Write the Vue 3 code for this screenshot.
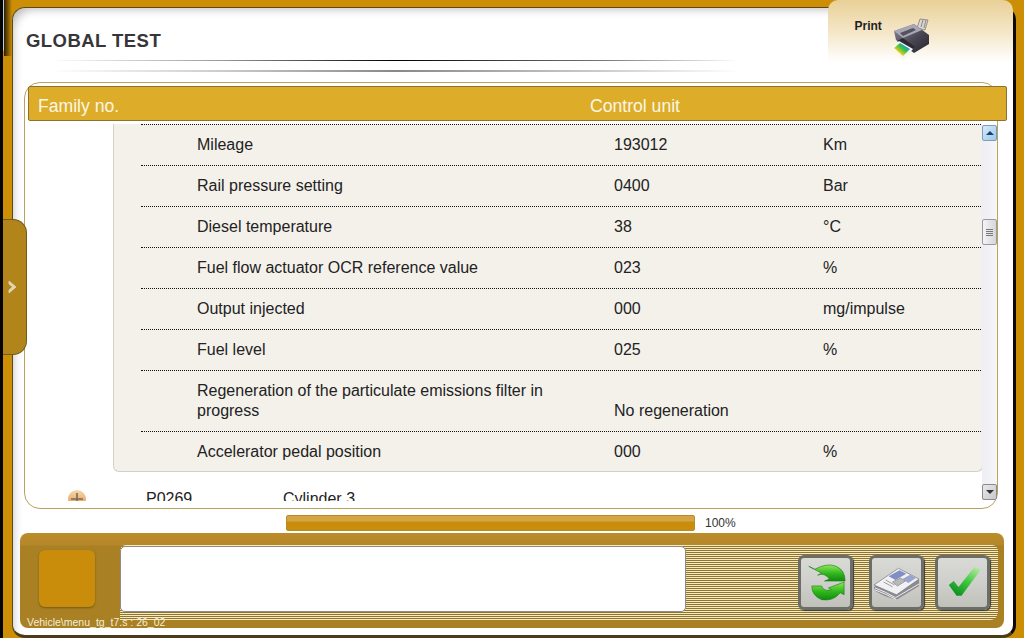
<script setup>
// rows of the opened parameter block
const rows = [
  { name: "Mileage", value: "193012", unit: "Km" },
  { name: "Rail pressure setting", value: "0400", unit: "Bar" },
  { name: "Diesel temperature", value: "38", unit: "°C" },
  { name: "Fuel flow actuator OCR reference value", value: "023", unit: "%" },
  { name: "Output injected", value: "000", unit: "mg/impulse" },
  { name: "Fuel level", value: "025", unit: "%" },
  { name: "Regeneration of the particulate emissions filter in progress", value: "No regeneration", unit: "" },
  { name: "Accelerator pedal position", value: "000", unit: "%" },
];
</script>

<template>
  <div class="frame">
    <div class="corner"></div>
    <div class="corner-shade"></div>

    <div class="panel">
      <!-- Title + print tab -->
      <div class="head">
        <div class="head-left">
          <h1>GLOBAL TEST</h1>
          <div class="line line-dark"></div>
          <div class="line line-soft"></div>
        </div>
        <div class="print-tab">
          <span>Print</span>
          <svg class="printer" width="42" height="42" viewBox="0 0 42 42">
            <defs>
              <linearGradient id="pbody" x1="0" y1="0" x2="1" y2="1">
                <stop offset="0" stop-color="#8d8a9c" />
                <stop offset="0.55" stop-color="#4a4754" />
                <stop offset="1" stop-color="#25232b" />
              </linearGradient>
              <linearGradient id="rainbow" x1="0" y1="1" x2="1" y2="0">
                <stop offset="0" stop-color="#e0289a" />
                <stop offset="0.3" stop-color="#f4c71c" />
                <stop offset="0.55" stop-color="#32c840" />
                <stop offset="0.8" stop-color="#2c8be8" />
                <stop offset="1" stop-color="#7a3cd0" />
              </linearGradient>
            </defs>
            <path d="M26 10 L29 1 L37 2 L34 12 Z" fill="#d8d6d0" stroke="#77736c" stroke-width="0.7" />
            <path d="M30 9 L32 2 M33 10 L35 2" stroke="#77736c" stroke-width="0.8" />
            <path d="M3 13 L23 6 L38 17 L38 26 L23 35 L5 22 Z" fill="url(#pbody)" />
            <path d="M3 13 L23 6 L31 12 L12 20 Z" fill="#a9a6b6" />
            <path d="M9 15 L22 10 L25 12 L12 18 Z" fill="#55525f" />
            <path d="M6 23 L12 20 L24 29 L18 33 Z" fill="#2b2931" />
            <path d="M0 30 L8 23 L22 31 L12 42 Z" fill="#f6f6f2" />
            <path d="M3 30 L9 25 L19 31 L12 38 Z" fill="url(#rainbow)" />
          </svg>
        </div>
      </div>

      <!-- Table frame -->
      <div class="table-frame">
        <div class="table-head">
          <span class="th-family">Family no.</span>
          <span>Control unit</span>
        </div>
        <div class="table-body">
          <div class="scroll-area">
            <div class="detail">
              <div v-for="row in rows" :key="row.name" class="row">
                <div class="cell-name">{{ row.name }}</div>
                <div>{{ row.value }}</div>
                <div>{{ row.unit }}</div>
              </div>
            </div>
            <div class="fault-row">
              <svg class="plus" width="18" height="18" viewBox="0 0 18 18">
                <defs>
                  <linearGradient id="peach" x1="0" y1="0" x2="0" y2="1">
                    <stop offset="0" stop-color="#f7d9a8" />
                    <stop offset="1" stop-color="#e0904c" />
                  </linearGradient>
                </defs>
                <circle cx="9" cy="9" r="9" fill="url(#peach)" />
                <path d="M9 3 V15 M3 9 H15" stroke="#7a6a58" stroke-width="1.6" />
              </svg>
              <span class="code">P0269</span>
              <span>Cylinder 3</span>
            </div>
          </div>
          <div class="scrollbar">
            <div class="sb-btn sb-up"><i></i></div>
            <div class="sb-thumb"><b></b><b></b><b></b><b></b></div>
            <div class="sb-btn sb-down"><i></i></div>
          </div>
        </div>
      </div>

      <!-- Progress -->
      <div class="progress-row">
        <div class="progress"><div class="progress-fill"></div></div>
        <span>100%</span>
      </div>

      <!-- Bottom bar -->
      <div class="bottom-bar">
        <div class="bar-left">
          <div class="square"></div>
          <div class="path-text">Vehicle\menu_tg_t7.s : 26_02</div>
        </div>
        <div class="stripes">
          <div class="message"></div>
          <div class="buttons">
            <button class="btn">
              <svg width="50" height="50" viewBox="0 0 50 50">
                <defs>
                  <linearGradient id="g1" x1="0" y1="0" x2="0" y2="1">
                    <stop offset="0" stop-color="#8ee85a" />
                    <stop offset="0.55" stop-color="#2fb51c" />
                    <stop offset="1" stop-color="#128a10" />
                  </linearGradient>
                </defs>
                <path d="M8 8 L21 15 L17 17 Q24 14 29 21 L24 23 L45 23 Q45 12 36 8 Q27 4 14 11 Z" fill="url(#g1)" stroke="#167a12" stroke-width="0.6" />
                <path d="M44 24 L44 37 L40 35 Q33 44 21 42 Q11 38 11 28 L21 28 Q23 34 31 32 L28 30 Z" fill="url(#g1)" stroke="#167a12" stroke-width="0.6" />
              </svg>
            </button>
            <button class="btn btn-paper">
              <svg width="50" height="50" viewBox="0 0 50 50">
                <path d="M2 29 L27 12 L48 22 L48 28 L25 42 Q14 40 3 33 Z" fill="#8b8b90" />
                <path d="M2 27 L27 10 L48 21 L25 37 Z" fill="#f1f1f3" stroke="#77777d" stroke-width="0.7" />
                <path d="M3 30 Q14 34 24 40 L48 26 M3 32 Q14 36 25 42" stroke="#f1f1f3" stroke-width="1" fill="none" />
                <path d="M17 18 L28 12 L35 15.5 L24 22 Z" fill="#7f8fc6" />
                <path d="M31 21 L39 16.5 L45 20 L37 25 Z" fill="#9aa5cf" />
                <path d="M14 22 L23 27 M12 24 L21 29 M21 24 L29 20 L34 23 L26 28 Z" stroke="#9a9a9e" stroke-width="1" fill="#b9b9bc" />
              </svg>
            </button>
            <button class="btn btn-check">
              <svg width="50" height="50" viewBox="0 0 50 50">
                <defs>
                  <linearGradient id="g2" x1="0.9" y1="0" x2="0.2" y2="1">
                    <stop offset="0" stop-color="#b8e8a8" />
                    <stop offset="0.5" stop-color="#3cc83c" />
                    <stop offset="1" stop-color="#0c8a20" />
                  </linearGradient>
                </defs>
                <path d="M11 27 L16 23 L21 29 L37 9 L44 11 L24 38 L19 38 Z" fill="url(#g2)" />
              </svg>
            </button>
          </div>
        </div>
      </div>
    </div>

    <!-- Slide-out tab -->
    <div class="side-tab">
      <svg width="10" height="14" viewBox="0 0 10 14">
        <path d="M1 1 L8 7 L1 13 L1 10 L4.5 7 L1 4 Z" fill="#e2d6b4" stroke="#e2d6b4" stroke-width="0.8" />
      </svg>
    </div>
  </div>
</template>

<style>
html, body {
  margin: 0;
  background: #000;
}
</style>

<style scoped>
.frame {
  position: relative;
  box-sizing: border-box;
  width: 1024px;
  height: 638px;
  padding: 7px 8px 0 9px;
  background: #cc8e04;
  border-left: 3px solid #050505;
  overflow: hidden;
  font-family: "Liberation Sans", Arial, sans-serif;
  font-size: 16px;
  color: #222;
}

/* Top-left leftovers */
.corner {
  position: absolute;
  left: -3px;
  top: 0;
  width: 4px;
  height: 52px;
  background: #b9cfe4;
  border-radius: 0 0 3px 0;
}

.corner-shade {
  position: absolute;
  left: 1px;
  top: 0;
  width: 8px;
  height: 56px;
  background: linear-gradient(to right, #2a1e06, #cc8e04);
}

.panel {
  position: relative;
  box-sizing: border-box;
  width: 1004px;
  height: 631px;
  background: #fff;
  border: 1px solid #5c4a1c;
  border-right: 3px solid #0a0a0a;
  border-bottom: 3px solid #4a3c18;
  border-radius: 13px;
  box-shadow: inset 9px 10px 10px -9px #bbb;
}

/* Header */
.head {
  display: flex;
  height: 74px;
}

.head-left {
  width: 804px;
  padding-left: 13px;
}

h1 {
  margin: 23px 0 0;
  font-size: 18.5px;
  line-height: 20px;
  letter-spacing: 0.45px;
  font-weight: bold;
  color: #36363a;
}

.line {
  margin-left: 24px;
  width: 690px;
  height: 1px;
}

.line-dark {
  margin-top: 9px;
  background: linear-gradient(to right, #fff, #999 25%, #000 50%, #777 80%, #fff);
}

.line-soft {
  margin-top: 9px;
  height: 2px;
  background: linear-gradient(to right, #fff, #ccc 25%, #888 50%, #ccc 80%, #fff);
}

.print-tab {
  display: flex;
  align-items: flex-start;
  box-sizing: border-box;
  width: 186px;
  height: 62px;
  margin-top: -8px;
  padding: 18px 0 0 27px;
  background: linear-gradient(to bottom, #e9d097, #f5e8cb 55%, #fff);
  border-radius: 10px 10px 0 0;
  font-size: 12px;
  font-weight: bold;
  line-height: 17px;
  color: #222;
}

.printer {
  margin-left: 9px;
}

/* Table */
.table-frame {
  box-sizing: border-box;
  width: 974px;
  height: 427px;
  margin-left: 11px;
  padding: 3px 0 0 3px;
  border: 1px solid #bba15e;
  border-radius: 16px;
}

.table-head {
  display: flex;
  box-sizing: border-box;
  width: 979px;
  height: 35px;
  background: #ddad2a;
  border: 1px solid #8a7232;
  border-radius: 2px;
  color: #fbf6e6;
  font-size: 17.6px;
  line-height: 38px;
}

.th-family {
  width: 552px;
  padding-left: 9px;
}

.table-body {
  display: flex;
  height: 380px;
  margin-left: -3px;
}

.scroll-area {
  width: 960px;
  height: 380px;
  overflow: hidden;
}

.detail {
  box-sizing: border-box;
  width: 870px;
  height: 348px;
  margin: 3px 0 0 88px;
  padding-left: 27px;
  padding-right: 1px;
  background: #f4f1eb;
  border: 1px solid #d2d0c8;
  border-top: none;
  border-radius: 0 0 6px 6px;
}

.row {
  display: grid;
  grid-template-columns: 473px 209px 1fr;
  align-items: end;
  padding: 10px 0;
  line-height: 20px;
  border-bottom: 1px dotted #111;
}

.row:first-child {
  border-top: 1px dotted #111;
}

.row:last-child {
  border-bottom: none;
}

.cell-name {
  padding-left: 56px;
  padding-right: 60px;
}

.fault-row {
  display: flex;
  align-items: flex-start;
  margin-top: 17px;
  padding-left: 43px;
  line-height: 20px;
}

.plus {
  margin-top: 1px;
}

.code {
  width: 137px;
  margin-left: 60px;
}

/* Scrollbar */
.scrollbar {
  position: relative;
  display: flex;
  flex-direction: column;
  width: 15px;
  height: 375px;
  margin-top: 4px;
  background: linear-gradient(to right, #eeeef3, #f6f6f9);
}

.sb-btn {
  display: flex;
  align-items: center;
  justify-content: center;
  box-sizing: border-box;
  width: 15px;
  height: 16px;
  border: 1px solid #7f9db9;
  border-radius: 2px;
}

.sb-up {
  background: linear-gradient(135deg, #d6ebfb, #9cc8ec);
}

.sb-up i {
  border-left: 4px solid transparent;
  border-right: 4px solid transparent;
  border-bottom: 4px solid #1d3f6a;
}

.sb-down {
  margin-top: auto;
  background: linear-gradient(135deg, #e8e8ea, #c8c8cc);
  border-color: #8a8a90;
}

.sb-down i {
  border-left: 4px solid transparent;
  border-right: 4px solid transparent;
  border-top: 4px solid #333;
}

.sb-thumb {
  display: flex;
  flex-direction: column;
  align-items: center;
  justify-content: center;
  gap: 1px;
  box-sizing: border-box;
  width: 15px;
  height: 26px;
  margin-top: 78px;
  background: linear-gradient(to right, #f4f4f6, #d6d6da);
  border: 1px solid #9a9aa0;
  border-radius: 2px;
}

.sb-thumb b {
  display: block;
  width: 7px;
  height: 1px;
  background: #77777c;
}

/* Progress */
.progress-row {
  display: flex;
  align-items: center;
  height: 16px;
  margin: 6px 0 0 273px;
  font-size: 12px;
  color: #333;
}

.progress {
  width: 409px;
  height: 16px;
  margin-right: 10px;
}

.progress-fill {
  height: 100%;
  background: linear-gradient(to bottom, #d3a544 0, #d3a544 5px, #c98d0b 6px);
  border: 1px solid #b98a2a;
  box-sizing: border-box;
  border-radius: 2px;
}

/* Bottom bar */
.bottom-bar {
  display: flex;
  box-sizing: border-box;
  width: 984px;
  height: 95px;
  margin: 2px 0 0 7px;
  padding-top: 12px;
  background: linear-gradient(to bottom, #bb8c28 0, #b5872a 12px, #a98023 13px);
  border-radius: 8px;
}

.bar-left {
  position: relative;
  width: 100px;
  z-index: 1;
}

.square {
  width: 56px;
  height: 57px;
  margin: 5px 0 0 19px;
  background: #c98d0b;
  border-radius: 6px;
  box-shadow: 0 1px 2px rgba(70, 50, 0, 0.5);
}

.path-text {
  margin: 9px 0 0 7px;
  font-size: 10.5px;
  line-height: 12px;
  color: #f4eed8;
  white-space: nowrap;
}

.stripes {
  display: flex;
  box-sizing: border-box;
  width: 878px;
  height: 75px;
  background: repeating-linear-gradient(to bottom, #f6ebbd 0, #f6ebbd 1px, #8f7434 1px, #8f7434 2px);
  border-radius: 6px 6px 8px 0;
}

.message {
  box-sizing: border-box;
  width: 566px;
  height: 66px;
  margin-top: 1px;
  background: #fff;
  border: 1px solid #8c8c88;
  border-radius: 5px;
}

.buttons {
  display: flex;
  margin: 10px 0 0 112px;
}

.btn {
  display: flex;
  align-items: center;
  justify-content: center;
  box-sizing: border-box;
  width: 55px;
  height: 55px;
  padding: 0;
  background: linear-gradient(to bottom, #d9d9d5, #cfcfcb 50%, #c1c1bc);
  border: 3px solid #6d6d68;
  border-radius: 6px;
  box-shadow: 1px 1px 1px #3a3a36;
}

.btn-paper {
  margin-left: 16px;
}

.btn-check {
  margin-left: 11px;
}

/* Slide-out tab on the left edge */
.side-tab {
  position: absolute;
  left: -3px;
  top: 219px;
  display: flex;
  align-items: center;
  justify-content: flex-end;
  box-sizing: border-box;
  width: 27px;
  height: 136px;
  padding-right: 8px;
  background: #b2851b;
  border: 1px solid #6f5a20;
  border-left: none;
  border-radius: 0 14px 14px 0;
}
</style>
